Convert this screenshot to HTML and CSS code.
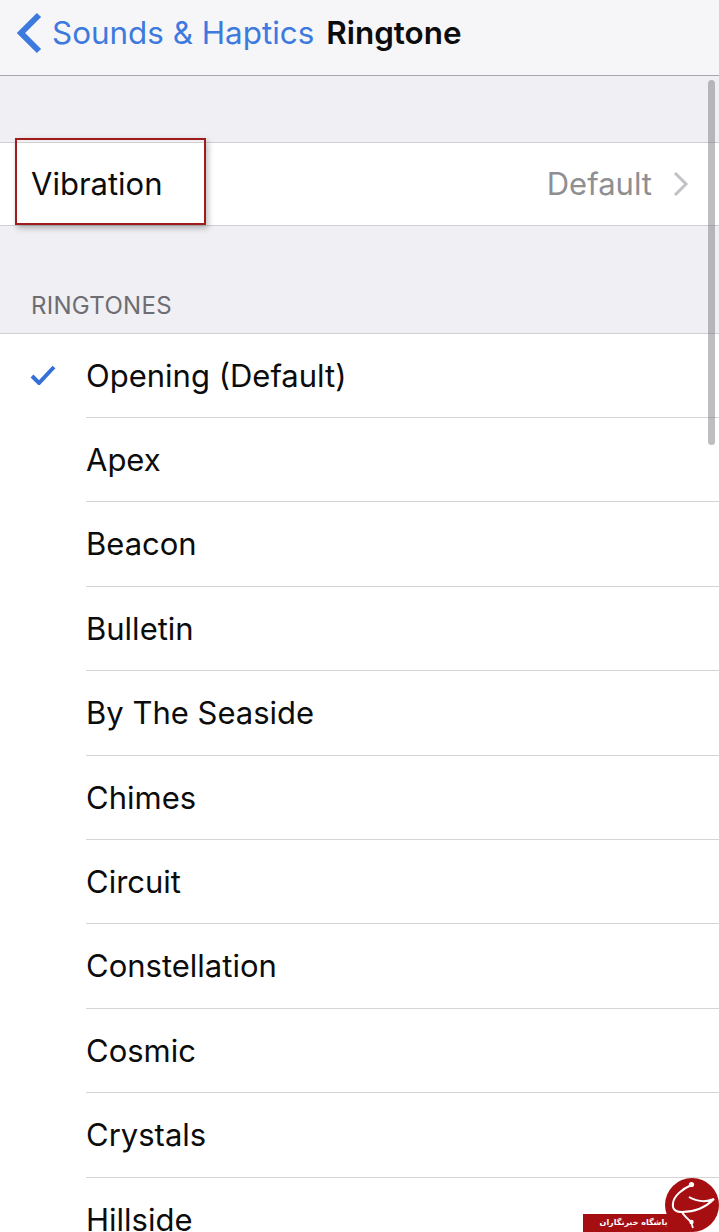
FILE: index.html
```html
<!DOCTYPE html>
<html lang="en">
<head>
    <meta charset="UTF-8">
    <meta name="viewport" content="width=device-width, initial-scale=1.0">
    <title>Ringtone</title>
    <link rel="stylesheet" href="styles.css">
</head>
<body>
    <header class="nav">
        <svg class="back-icon" width="28" height="42" viewBox="0 0 28 42">
            <path d="M24 3 L6 21 L24 39" fill="none" stroke="#3d7ade" stroke-width="6"/>
        </svg>
        <span class="back-label">Sounds &amp; Haptics</span>
        <span class="nav-title">Ringtone</span>
    </header>

    <main class="content">
        <section class="vibration-row">
            <span class="row-label">Vibration</span>
            <span class="row-value">Default</span>
            <svg class="chevron" width="18" height="26" viewBox="0 0 18 26">
                <path d="M3 2 L14 13 L3 24" fill="none" stroke="#c2c2c6" stroke-width="3"/>
            </svg>
            <div class="highlight"></div>
        </section>

        <h2 class="section-title">RINGTONES</h2>

        <ul class="tone-list">
            <li class="tone">
                <svg class="check" width="26" height="20" viewBox="0 0 26 20">
                    <path d="M2 11 L9 18 L24 2" fill="none" stroke="#3470d8" stroke-width="4"/>
                </svg>
                <span class="tone-name">Opening (Default)</span>
            </li>
            <li class="tone"><span class="tone-name">Apex</span></li>
            <li class="tone"><span class="tone-name">Beacon</span></li>
            <li class="tone"><span class="tone-name">Bulletin</span></li>
            <li class="tone"><span class="tone-name">By The Seaside</span></li>
            <li class="tone"><span class="tone-name">Chimes</span></li>
            <li class="tone"><span class="tone-name">Circuit</span></li>
            <li class="tone"><span class="tone-name">Constellation</span></li>
            <li class="tone"><span class="tone-name">Cosmic</span></li>
            <li class="tone"><span class="tone-name">Crystals</span></li>
            <li class="tone"><span class="tone-name">Hillside</span></li>
        </ul>
    </main>

    <div class="scrollbar"></div>

    <div class="watermark">
        <span class="watermark-bar">باشگاه خبرنگاران</span>
        <svg class="watermark-logo" width="54" height="54" viewBox="0 0 54 54">
            <circle cx="27" cy="27" r="27" fill="#a50f12"/>
            <path d="M26.5 7 C17 11 9 18 8 25 C7 31 10 34 17 34 C29 34 41 29 49 21 C42 24 33 24 24 19" fill="none" stroke="#fff" stroke-width="2"/>
            <path d="M17 34 C19 38 23 41 26 44 L28 50" fill="none" stroke="#fff" stroke-width="1.8"/>
            <circle cx="26.5" cy="6.5" r="2.6" fill="#fff"/>
            <circle cx="26.5" cy="44" r="2.2" fill="#fff"/>
        </svg>
    </div>
</body>
</html>
```

FILE: styles.css
```css
html, body {
    margin: 0;
    padding: 0;
    height: 1232px;
    overflow: hidden;
}
body {
    position: relative;
    font-family: Inter, "Liberation Sans", sans-serif;
    background: #efeff4;
    color: #0c0c0c;
}
.nav {
    display: flex;
    align-items: center;
    box-sizing: border-box;
    height: 76px;
    padding: 0 0 10px 15px;
    background: #f6f6f8;
    border-bottom: 1px solid #a8a8aa;
}
.back-icon {
    margin-right: 9px;
}
.back-label {
    font-size: 31.4px;
    color: #3d7ade;
    margin-right: 12px;
}
.nav-title {
    font-size: 31.4px;
    font-weight: 600;
}
.content {
    padding-top: 66px;
}
.vibration-row {
    position: relative;
    display: flex;
    align-items: center;
    box-sizing: border-box;
    height: 84px;
    padding: 0 29px 0 31px;
    background: #fff;
    border-top: 1px solid #d0d0d4;
    border-bottom: 1px solid #d0d0d4;
}
.row-label {
    font-size: 31px;
    flex: 1;
    padding-bottom: 2px;
}
.row-value {
    font-size: 31px;
    color: #8e8e93;
    margin-right: 20px;
    padding-bottom: 2px;
}
.highlight {
    position: absolute;
    left: 15px;
    top: -5px;
    width: 187px;
    height: 83px;
    border: 2px solid #a01c1c;
    box-shadow: 2px 3px 6px rgba(0, 0, 0, 0.28);
}
.section-title {
    margin: 0;
    height: 107px;
    box-sizing: border-box;
    padding: 66px 0 0 31px;
    font-size: 24px;
    line-height: 28px;
    letter-spacing: 0.3px;
    font-weight: 400;
    color: #6d6d72;
}
.tone-list {
    list-style: none;
    margin: 0;
    padding: 0;
    background: #fff;
    border-top: 1px solid #d0d0d4;
}
.tone {
    position: relative;
    display: flex;
    align-items: center;
    box-sizing: border-box;
    height: 84.4px;
    padding: 0 0 1.2px 86px;
}
.tone:first-child {
    height: 84px;
}
.tone::after {
    content: "";
    position: absolute;
    left: 86px;
    right: 0;
    bottom: 0;
    border-bottom: 1px solid #d4d4d6;
}
.tone-name {
    font-size: 31px;
}
.check {
    position: absolute;
    left: 30px;
    top: 31px;
}
.scrollbar {
    position: absolute;
    left: 708px;
    top: 80px;
    width: 7px;
    height: 365px;
    border-radius: 4px;
    background: rgba(110, 110, 115, 0.45);
}
.watermark {
    position: absolute;
    right: 0;
    bottom: 0;
    width: 136px;
    height: 54px;
}
.watermark-bar {
    position: absolute;
    left: 0;
    bottom: 0;
    box-sizing: border-box;
    width: 107px;
    height: 18px;
    padding-right: 6px;
    background: #a50f12;
    color: #fff;
    font-family: "DejaVu Sans", sans-serif;
    font-size: 8px;
    font-weight: 700;
    line-height: 18px;
    text-align: center;
    white-space: nowrap;
}
.watermark-logo {
    position: absolute;
    right: 0;
    top: 0;
}
```
